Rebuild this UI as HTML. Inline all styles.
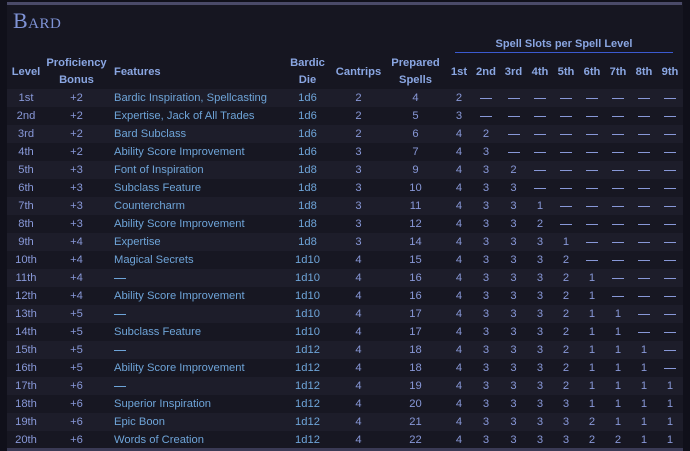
<!DOCTYPE html>
<html><head><meta charset="utf-8"><style>
html,body{margin:0;padding:0;background:#10101a;width:690px;height:451px;overflow:hidden}
.panel{position:absolute;left:7px;top:2px;width:676px;height:449px;background:#161621}
.bar{position:absolute;left:0;top:0;width:675px;height:3px;background:#4a4a68}
.bot{position:absolute;left:0;top:446px;width:676px;height:3px;background:#3a3a55}
h1{position:absolute;left:6px;top:6px;margin:0;font-family:"Liberation Serif",serif;font-weight:normal;font-size:22px;color:#7f93d6;font-variant:small-caps;letter-spacing:0.5px}
.ss{position:absolute;left:448px;top:36px;width:218px;text-align:center;font:bold 11px "Liberation Sans",sans-serif;color:#8aa6e2;border-bottom:1px solid #3b5ad0;padding-bottom:2px}
table{position:absolute;left:0;top:53px;border-collapse:collapse;table-layout:fixed;width:676px;font-family:"Liberation Sans",sans-serif;font-size:11.2px}
th{color:#8aa6e2;font-weight:bold;text-align:center;height:34px;line-height:17px;padding:0;vertical-align:middle}
td{height:18px;padding:0;text-align:center;color:#8898d8;line-height:18px;white-space:nowrap}
td:nth-child(3),th:nth-child(3){text-align:left;padding-left:6px}
td:nth-child(3),td:nth-child(4){color:#6ea4d8}
td i{display:inline-block;width:12px;height:1px;background:#8898d8;vertical-align:middle}
td:nth-child(3) i{background:#6ea4d8}
tbody tr:nth-child(odd){background:#1d1d2a}
tbody tr:nth-child(even){background:#171722}
</style></head><body>
<div class="panel"><div class="bar"></div>
<h1>Bard</h1>
<div class="ss">Spell Slots per Spell Level</div>
<table>
<colgroup><col style="width:38px"><col style="width:63px"><col style="width:175px"><col style="width:49px"><col style="width:53px"><col style="width:61px"><col style="width:26px"><col style="width:28px"><col style="width:27px"><col style="width:26px"><col style="width:26px"><col style="width:26px"><col style="width:26px"><col style="width:26px"><col style="width:26px"></colgroup>
<thead><tr><th>Level</th><th>Proficiency<br>Bonus</th><th>Features</th><th>Bardic<br>Die</th><th>Cantrips</th><th>Prepared<br>Spells</th><th>1st</th><th>2nd</th><th>3rd</th><th>4th</th><th>5th</th><th>6th</th><th>7th</th><th>8th</th><th>9th</th></tr></thead>
<tbody>
<tr><td>1st</td><td>+2</td><td>Bardic Inspiration, Spellcasting</td><td>1d6</td><td>2</td><td>4</td><td>2</td><td><i></i></td><td><i></i></td><td><i></i></td><td><i></i></td><td><i></i></td><td><i></i></td><td><i></i></td><td><i></i></td></tr>
<tr><td>2nd</td><td>+2</td><td>Expertise, Jack of All Trades</td><td>1d6</td><td>2</td><td>5</td><td>3</td><td><i></i></td><td><i></i></td><td><i></i></td><td><i></i></td><td><i></i></td><td><i></i></td><td><i></i></td><td><i></i></td></tr>
<tr><td>3rd</td><td>+2</td><td>Bard Subclass</td><td>1d6</td><td>2</td><td>6</td><td>4</td><td>2</td><td><i></i></td><td><i></i></td><td><i></i></td><td><i></i></td><td><i></i></td><td><i></i></td><td><i></i></td></tr>
<tr><td>4th</td><td>+2</td><td>Ability Score Improvement</td><td>1d6</td><td>3</td><td>7</td><td>4</td><td>3</td><td><i></i></td><td><i></i></td><td><i></i></td><td><i></i></td><td><i></i></td><td><i></i></td><td><i></i></td></tr>
<tr><td>5th</td><td>+3</td><td>Font of Inspiration</td><td>1d8</td><td>3</td><td>9</td><td>4</td><td>3</td><td>2</td><td><i></i></td><td><i></i></td><td><i></i></td><td><i></i></td><td><i></i></td><td><i></i></td></tr>
<tr><td>6th</td><td>+3</td><td>Subclass Feature</td><td>1d8</td><td>3</td><td>10</td><td>4</td><td>3</td><td>3</td><td><i></i></td><td><i></i></td><td><i></i></td><td><i></i></td><td><i></i></td><td><i></i></td></tr>
<tr><td>7th</td><td>+3</td><td>Countercharm</td><td>1d8</td><td>3</td><td>11</td><td>4</td><td>3</td><td>3</td><td>1</td><td><i></i></td><td><i></i></td><td><i></i></td><td><i></i></td><td><i></i></td></tr>
<tr><td>8th</td><td>+3</td><td>Ability Score Improvement</td><td>1d8</td><td>3</td><td>12</td><td>4</td><td>3</td><td>3</td><td>2</td><td><i></i></td><td><i></i></td><td><i></i></td><td><i></i></td><td><i></i></td></tr>
<tr><td>9th</td><td>+4</td><td>Expertise</td><td>1d8</td><td>3</td><td>14</td><td>4</td><td>3</td><td>3</td><td>3</td><td>1</td><td><i></i></td><td><i></i></td><td><i></i></td><td><i></i></td></tr>
<tr><td>10th</td><td>+4</td><td>Magical Secrets</td><td>1d10</td><td>4</td><td>15</td><td>4</td><td>3</td><td>3</td><td>3</td><td>2</td><td><i></i></td><td><i></i></td><td><i></i></td><td><i></i></td></tr>
<tr><td>11th</td><td>+4</td><td><i></i></td><td>1d10</td><td>4</td><td>16</td><td>4</td><td>3</td><td>3</td><td>3</td><td>2</td><td>1</td><td><i></i></td><td><i></i></td><td><i></i></td></tr>
<tr><td>12th</td><td>+4</td><td>Ability Score Improvement</td><td>1d10</td><td>4</td><td>16</td><td>4</td><td>3</td><td>3</td><td>3</td><td>2</td><td>1</td><td><i></i></td><td><i></i></td><td><i></i></td></tr>
<tr><td>13th</td><td>+5</td><td><i></i></td><td>1d10</td><td>4</td><td>17</td><td>4</td><td>3</td><td>3</td><td>3</td><td>2</td><td>1</td><td>1</td><td><i></i></td><td><i></i></td></tr>
<tr><td>14th</td><td>+5</td><td>Subclass Feature</td><td>1d10</td><td>4</td><td>17</td><td>4</td><td>3</td><td>3</td><td>3</td><td>2</td><td>1</td><td>1</td><td><i></i></td><td><i></i></td></tr>
<tr><td>15th</td><td>+5</td><td><i></i></td><td>1d12</td><td>4</td><td>18</td><td>4</td><td>3</td><td>3</td><td>3</td><td>2</td><td>1</td><td>1</td><td>1</td><td><i></i></td></tr>
<tr><td>16th</td><td>+5</td><td>Ability Score Improvement</td><td>1d12</td><td>4</td><td>18</td><td>4</td><td>3</td><td>3</td><td>3</td><td>2</td><td>1</td><td>1</td><td>1</td><td><i></i></td></tr>
<tr><td>17th</td><td>+6</td><td><i></i></td><td>1d12</td><td>4</td><td>19</td><td>4</td><td>3</td><td>3</td><td>3</td><td>2</td><td>1</td><td>1</td><td>1</td><td>1</td></tr>
<tr><td>18th</td><td>+6</td><td>Superior Inspiration</td><td>1d12</td><td>4</td><td>20</td><td>4</td><td>3</td><td>3</td><td>3</td><td>3</td><td>1</td><td>1</td><td>1</td><td>1</td></tr>
<tr><td>19th</td><td>+6</td><td>Epic Boon</td><td>1d12</td><td>4</td><td>21</td><td>4</td><td>3</td><td>3</td><td>3</td><td>3</td><td>2</td><td>1</td><td>1</td><td>1</td></tr>
<tr><td>20th</td><td>+6</td><td>Words of Creation</td><td>1d12</td><td>4</td><td>22</td><td>4</td><td>3</td><td>3</td><td>3</td><td>3</td><td>2</td><td>2</td><td>1</td><td>1</td></tr>
</tbody></table>
<div class="bot"></div>
</div>
</body></html>
